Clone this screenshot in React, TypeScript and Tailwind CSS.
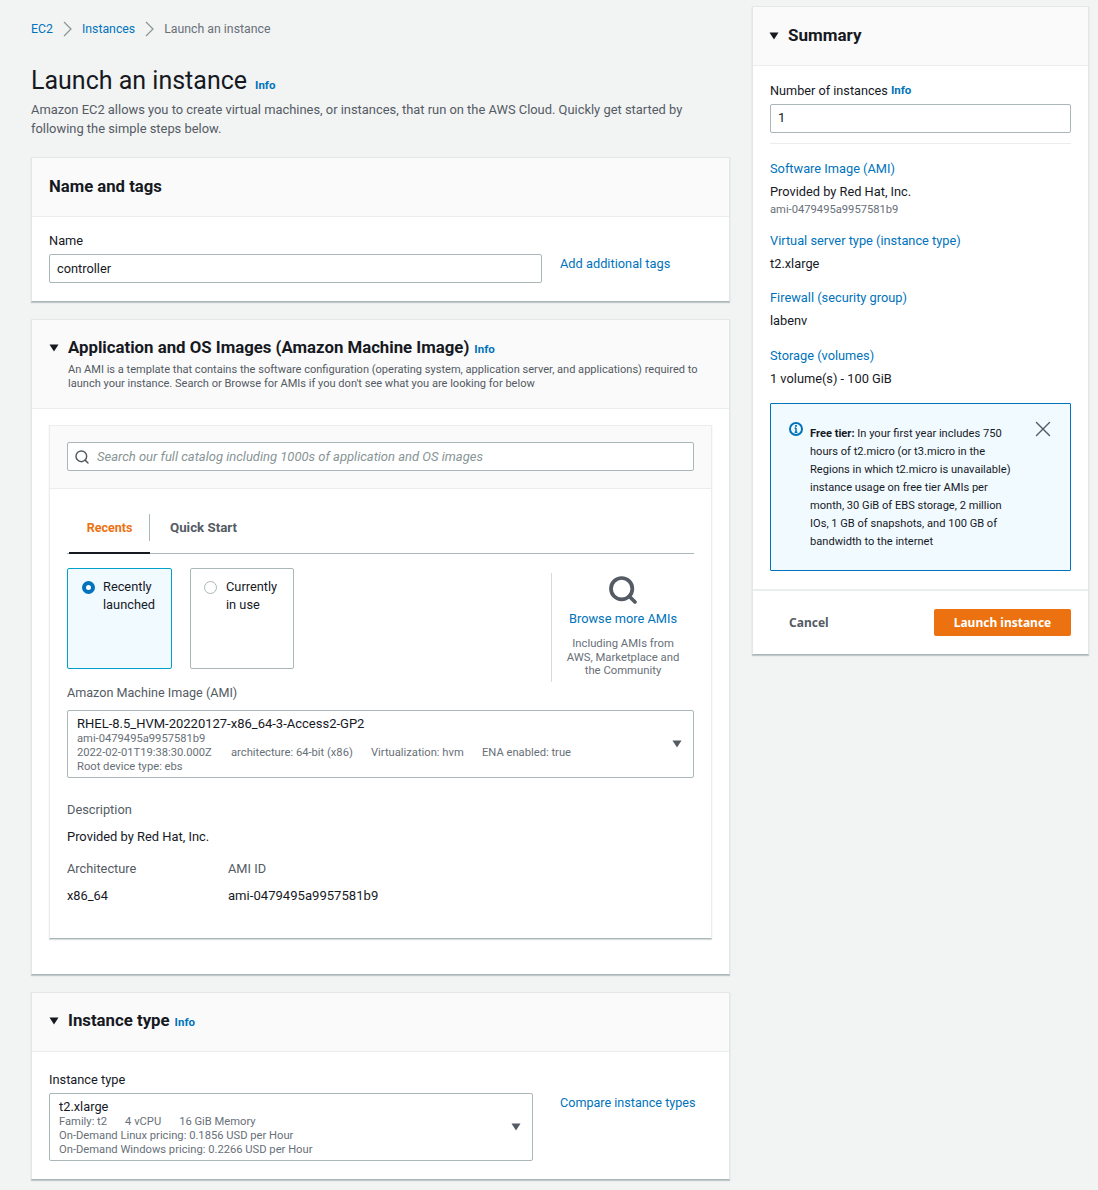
import { Search, X } from 'lucide-react'

const FONT = "font-['Roboto',sans-serif]"

function Info() {
  return <span className="text-[11.5px] leading-none font-bold text-[#0073bb]">Info</span>
}

function Caret({ className = '' }: { className?: string }) {
  return (
    <svg className={className} width="10" height="8" viewBox="0 0 10 8">
      <path d="M0.5 0.5h9L5 7.5z" fill="currentColor" />
    </svg>
  )
}

function Crumb() {
  return (
    <svg className="mx-[10px] text-[#879596]" width="9" height="16" viewBox="0 0 9 16" fill="none">
      <path d="M1 1l7 7-7 7" stroke="currentColor" strokeWidth="1.2" />
    </svg>
  )
}

function Card({ children, className = '' }: { children: React.ReactNode; className?: string }) {
  return (
    <section className={`bg-white border-x border-t border-[#e5e7e7] border-b border-b-[#aab7b8] shadow-[0_1px_1px_rgba(0,28,36,0.2)] ${className}`}>
      {children}
    </section>
  )
}

function SummaryItem({ title, value, sub, className = '' }: { title: string; value: string; sub?: string; className?: string }) {
  return (
    <div className={className}>
      <div className="text-[12.8px] leading-[18px] text-[#0073bb]">{title}</div>
      <div className="mt-[5px] text-[12.8px] leading-[18px] text-[#16191f]">{value}</div>
      {sub && <div className="mt-[2px] -mb-[1px] text-[11.2px] leading-[14px] text-[#687078]">{sub}</div>}
    </div>
  )
}

export default function App() {
  return (
    <div className={`${FONT} bg-[#f2f3f3] h-[1190px] overflow-hidden flex items-start text-[#16191f]`}>
      <main className="ml-[31px] w-[699px] shrink-0">
        <nav className="flex items-center h-[18px] mt-[20px] text-[12.3px] text-[#687078]">
          <span className="text-[#0073bb]">EC2</span>
          <Crumb />
          <span className="text-[#0073bb]">Instances</span>
          <Crumb />
          <span>Launch an instance</span>
        </nav>

        <div className="mt-[28px] flex items-baseline gap-[8px] h-[30px]">
          <h1 className="text-[25px] leading-[30px]">Launch an instance</h1>
          <Info />
        </div>
        <p className="mt-[4px] w-[670px] text-[12.9px] leading-[19px] text-[#545b64]">
          Amazon EC2 allows you to create virtual machines, or instances, that run on the AWS Cloud. Quickly get started by following the simple steps below.
        </p>

        <Card className="mt-[19px]">
          <div className="h-[59px] flex items-center px-[17px] bg-[#fafafa] border-b border-[#eaeded]">
            <h2 className="text-[16.7px] font-bold">Name and tags</h2>
          </div>
          <div className="px-[17px] pt-[16px] pb-[18px] flex">
            <div className="w-[493px]">
              <div className="text-[12.8px] leading-[16px]">Name</div>
              <div className="mt-[5px] h-[29px] border border-[#aab7b8] rounded-[2px] px-[7px] flex items-center text-[12.8px]">controller</div>
            </div>
            <a className="ml-[18px] mt-[22px] text-[12.8px] leading-[18px] text-[#0073bb]">Add additional tags</a>
          </div>
        </Card>

        <Card className="mt-[17px]">
          <div className="h-[89px] bg-[#fafafa] border-b border-[#eaeded] px-[17px] pt-[17px]">
            <div className="flex items-center h-[22px]">
              <Caret className="mr-[9px]" />
              <h2 className="text-[16.8px] font-bold">Application and OS Images (Amazon Machine Image)</h2>
              <span className="ml-[5px]"><Info /></span>
            </div>
            <p className="ml-[19px] mt-[4px] text-[11.05px] leading-[14px] text-[#545b64]">
              An AMI is a template that contains the software configuration (operating system, application server, and applications) required to launch your instance. Search or Browse for AMIs if you don't see what you are looking for below
            </p>
          </div>

          <div className="px-[17px] pt-[16px] pb-[35px]">
            <div className="border-x border-t border-[#eaeded] border-b border-b-[#aab7b8] shadow-[0_1px_1px_rgba(0,28,36,0.15)]">
              <div className="h-[63px] bg-[#fafafa] border-b border-[#eaeded] px-[17px] pt-[16px]">
                <div className="h-[29px] bg-white border border-[#aab7b8] rounded-[2px] flex items-center px-[6px] gap-[7px]">
                  <Search size={16} strokeWidth={2.2} className="text-[#545b64]" />
                  <span className="text-[13px] italic text-[#879596]">Search our full catalog including 1000s of application and OS images</span>
                </div>
              </div>

              <div className="px-[17px]">
                <div className="h-[65px] pt-[15px] flex border-b border-[#aab7b8]">
                  <div className="relative w-[81px] ml-[2px] flex items-center justify-center">
                    <span className="text-[12.5px] font-bold text-[#ec7211]">Recents</span>
                    <span className="absolute left-0 right-0 bottom-[-1px] h-[2px] bg-[#16191f]" />
                    <span className="absolute right-0 top-[10px] h-[27px] w-px bg-[#aab7b8]" />
                  </div>
                  <div className="pl-[20px] pb-[2px] flex items-center text-[13.3px] font-bold text-[#545b64]">Quick Start</div>
                </div>

                <div className="flex mt-[14px]">
                  <div className="w-[105px] h-[101px] border border-[#00a1c9] rounded-[2px] bg-[#f1faff] flex pl-[14px] pt-[9px] gap-[8px]">
                    <span className="mt-[3px] w-[13px] h-[13px] rounded-full border-[4px] border-[#0073bb] bg-white shrink-0" />
                    <span className="text-[12.8px] leading-[18px]">Recently launched</span>
                  </div>
                  <div className="ml-[18px] w-[104px] h-[101px] border border-[#aab7b8] rounded-[2px] flex pl-[13px] pt-[9px] gap-[9px]">
                    <span className="mt-[3px] w-[13px] h-[13px] rounded-full border border-[#aab7b8] bg-white shrink-0" />
                    <span className="text-[12.8px] leading-[18px]">Currently<br />in use</span>
                  </div>
                  <div className="ml-auto mt-[5px] h-[109px] w-[143px] border-l border-[#d5dbdb] flex flex-col items-center">
                    <Search size={32} strokeWidth={2.8} className="text-[#545b64] mt-[1px] -mb-[1px]" />
                    <a className="mt-[5px] text-[12.8px] leading-[18px] text-[#0073bb]">Browse more AMIs</a>
                    <p className="mt-[9px] text-[11.3px] leading-[13.5px] text-[#687078] text-center">Including AMIs from<br />AWS, Marketplace and<br />the Community</p>
                  </div>
                </div>

                <div className="mt-[2px] text-[12.6px] leading-[18px] text-[#545b64]">Amazon Machine Image (AMI)</div>

                <div className="mt-[8px] h-[68px] border border-[#aab7b8] rounded-[2px] pl-[9px] pt-[4px] relative">
                  <div className="text-[13px] leading-[17px]">RHEL-8.5_HVM-20220127-x86_64-3-Access2-GP2</div>
                  <div className="text-[11.2px] leading-[14px] text-[#687078]">
                    <div>ami-0479495a9957581b9</div>
                    <div className="flex">
                      <span className="w-[154px]">2022-02-01T19:38:30.000Z</span>
                      <span className="w-[140px]">architecture: 64-bit (x86)</span>
                      <span className="w-[111px]">Virtualization: hvm</span>
                      <span>ENA enabled: true</span>
                    </div>
                    <div>Root device type: ebs</div>
                  </div>
                  <Caret className="absolute right-[11px] top-[29px] text-[#545b64]" />
                </div>

                <div className="mt-[23px] text-[12.8px] leading-[18px] text-[#545b64]">Description</div>
                <div className="mt-[9px] text-[12.9px] leading-[18px]">Provided by Red Hat, Inc.</div>

                <div className="mt-[14px] flex">
                  <div className="w-[161px]">
                    <div className="text-[12.8px] leading-[18px] text-[#545b64]">Architecture</div>
                    <div className="mt-[9px] text-[12.8px] leading-[18px]">x86_64</div>
                  </div>
                  <div>
                    <div className="text-[12.8px] leading-[18px] text-[#545b64]">AMI ID</div>
                    <div className="mt-[9px] text-[13.1px] leading-[18px]">ami-0479495a9957581b9</div>
                  </div>
                </div>
                <div className="h-[33px]" />
              </div>
            </div>
          </div>
        </Card>

        <Card className="mt-[17px]">
          <div className="h-[59px] bg-[#fafafa] border-b border-[#eaeded] px-[17px] pb-[3px] flex items-center">
            <Caret className="mr-[9px]" />
            <h2 className="text-[16.8px] font-bold">Instance type</h2>
            <span className="ml-[5px]"><Info /></span>
          </div>
          <div className="px-[17px] pt-[20px] pb-[18px] flex">
            <div className="w-[484px]">
              <div className="text-[12.8px] leading-[16px]">Instance type</div>
              <div className="mt-[5px] h-[68px] border border-[#aab7b8] rounded-[2px] pl-[9px] pt-[4px] relative">
                <div className="text-[12.8px] leading-[17px]">t2.xlarge</div>
                <div className="text-[11.2px] leading-[14px] text-[#687078]">
                  <div className="flex gap-[18px]"><span>Family: t2</span><span>4 vCPU</span><span>16 GiB Memory</span></div>
                  <div>On-Demand Linux pricing: 0.1856 USD per Hour</div>
                  <div>On-Demand Windows pricing: 0.2266 USD per Hour</div>
                </div>
                <Caret className="absolute right-[11px] top-[29px] text-[#545b64]" />
              </div>
            </div>
            <a className="ml-[27px] mt-[22px] text-[12.6px] leading-[18px] text-[#0073bb]">Compare instance types</a>
          </div>
        </Card>
      </main>

      <aside className="ml-[22px] mt-[6px] w-[337px] shrink-0">
        <Card>
          <div className="h-[59px] bg-[#fafafa] border-b border-[#eaeded] px-[16px] flex items-center">
            <Caret className="mr-[9px]" />
            <h2 className="text-[17px] font-bold">Summary</h2>
          </div>
          <div className="px-[17px] pt-[17px]">
            <div className="flex items-center gap-[3px] h-[16px] text-[12.7px]">Number of instances <Info /></div>
            <div className="mt-[5px] h-[29px] border border-[#aab7b8] rounded-[2px] px-[7px] pb-[2px] flex items-center text-[13px]">1</div>
            <div className="mt-[10px] border-t border-[#eaeded]" />
            <div className="mt-[16px] flex flex-col gap-[16px]">
              <SummaryItem title="Software Image (AMI)" value="Provided by Red Hat, Inc." sub="ami-0479495a9957581b9" />
              <SummaryItem title="Virtual server type (instance type)" value="t2.xlarge" />
              <SummaryItem title="Firewall (security group)" value="labenv" />
              <SummaryItem className="mt-[1px]" title="Storage (volumes)" value="1 volume(s) - 100 GiB" />
            </div>
            <div className="mt-[15px] h-[168px] border border-[#0073bb] rounded-[1px] bg-[#f1faff] flex pl-[18px] pt-[20px]">
              <svg className="shrink-0 -mt-[2px]" width="14" height="14" viewBox="0 0 14 14" fill="none">
                <circle cx="7" cy="7" r="6" stroke="#0073bb" strokeWidth="2" />
                <path d="M7 6v4.2M5.6 10.2h2.8M5.6 6h1.4" stroke="#0073bb" strokeWidth="1.5" />
                <rect x="6.1" y="3" width="1.8" height="1.8" fill="#0073bb" />
              </svg>
              <p className="ml-[7px] w-[210px] h-[130px] mt-[1px] text-[11.1px] leading-[18px]">
                <span className="font-bold">Free tier:</span> In your first year includes 750 hours of t2.micro (or t3.micro in the Regions in which t2.micro is unavailable) instance usage on free tier AMIs per month, 30 GiB of EBS storage, 2 million IOs, 1 GB of snapshots, and 100 GB of bandwidth to the internet
              </p>
              <X size={26} strokeWidth={1.3} className="ml-[10px] -mt-[8px] text-[#545b64] shrink-0" />
            </div>
          </div>
          <div className="mt-[18px] h-[65px] border-t-2 border-[#eaeded] px-[17px] flex items-center justify-between">
            <span className="ml-[19px] text-[12px] font-bold text-[#545b64] font-['Noto_Sans',sans-serif]">Cancel</span>
            <span className="w-[137px] h-[27px] rounded-[2px] bg-[#ec7211] text-white text-[12px] font-bold flex items-center justify-center font-['Noto_Sans',sans-serif]">Launch instance</span>
          </div>
        </Card>
      </aside>
    </div>
  )
}
